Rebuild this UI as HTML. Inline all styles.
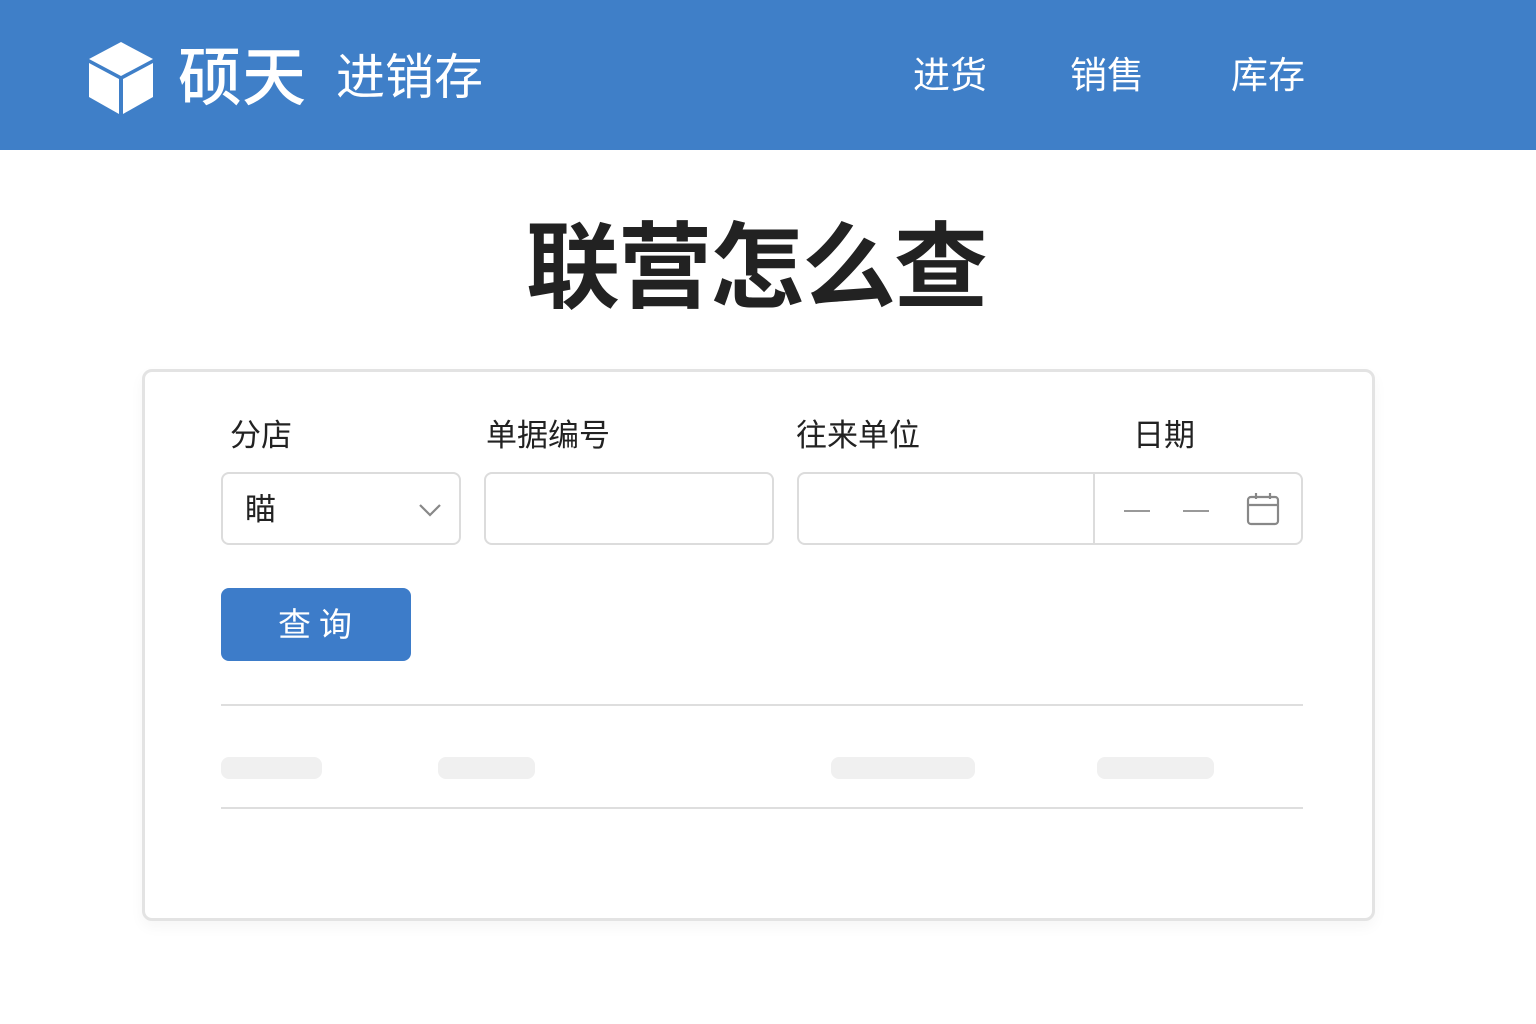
<!DOCTYPE html>
<html><head><meta charset="utf-8"><style>
*{margin:0;padding:0;box-sizing:border-box}
body{width:1536px;height:1024px;background:#fff;font-family:"Liberation Sans","Noto Sans CJK SC",sans-serif;position:relative;overflow:hidden;color:#222}
.hdr{position:absolute;left:0;top:0;width:1536px;height:150px;background:#3f7fc8}
.abs{position:absolute;white-space:nowrap}
.w{color:#fff}
.card{position:absolute;left:142px;top:369px;width:1233px;height:552px;border:3px solid #e3e3e3;border-radius:10px;background:#fff;box-shadow:0 6px 14px rgba(0,0,0,0.04)}
.lbl{font-size:31px;color:#222;top:410px}
.box{position:absolute;top:472px;height:73px;border:2px solid #dcdcdc;border-radius:8px;background:#fff}
.sk{position:absolute;top:757px;height:22px;background:#f0f0f0;border-radius:8px}
.line{position:absolute;left:221px;width:1082px;height:2px;background:#dedede}
</style></head><body>
<div class="hdr"></div>
<svg class="abs" style="left:86px;top:40px" width="70" height="76" viewBox="0 0 70 76">
<polygon points="35,2 67,19 35,36 3,19" fill="#fff"/>
<polygon points="3,23 33,39 33,74 3,57" fill="#fff"/>
<polygon points="37,39 67,23 67,57 37,74" fill="#fff"/>
</svg>
<div class="abs w" style="left:178px;top:40px;font-size:64px;font-weight:500;line-height:76px">硕天</div>
<div class="abs w" style="left:336px;top:48px;font-size:49px;line-height:60px">进销存</div>
<div class="abs w" style="left:913px;top:52px;font-size:37px;line-height:48px">进货</div>
<div class="abs w" style="left:1070px;top:52px;font-size:37px;line-height:48px">销售</div>
<div class="abs w" style="left:1231px;top:52px;font-size:37px;line-height:48px">库存</div>
<div class="abs" style="left:0;width:1536px;text-align:center;top:213px;font-size:94px;font-weight:bold;line-height:110px;color:#222;letter-spacing:-2px;padding-right:24px">联营怎么查</div>
<div class="card"></div>
<div class="abs lbl" style="left:230px">分店</div>
<div class="abs lbl" style="left:486px">单据编号</div>
<div class="abs lbl" style="left:796px">往来单位</div>
<div class="abs lbl" style="left:1133px">日期</div>
<div class="box" style="left:221px;width:240px"></div>
<div class="abs" style="left:245px;top:490px;font-size:31px;line-height:40px">瞄</div>
<svg class="abs" style="left:418px;top:502px" width="26" height="16"><polyline points="2,3 12,13 22,3" fill="none" stroke="#888" stroke-width="2.2"/></svg>
<div class="box" style="left:484px;width:290px"></div>
<div class="box" style="left:797px;width:506px"></div>
<div class="abs" style="left:1093px;top:474px;width:2px;height:69px;background:#dcdcdc"></div>
<div class="abs" style="left:1124px;top:510px;width:26px;height:2px;background:#999"></div>
<div class="abs" style="left:1183px;top:510px;width:26px;height:2px;background:#999"></div>
<svg class="abs" style="left:1246px;top:492px" width="34" height="34" viewBox="0 0 34 34"><rect x="2" y="5" width="30" height="27" rx="3" fill="none" stroke="#888" stroke-width="2.2"/><line x1="2" y1="13" x2="32" y2="13" stroke="#888" stroke-width="2.2"/><line x1="10" y1="1" x2="10" y2="7" stroke="#888" stroke-width="2.2"/><line x1="24" y1="1" x2="24" y2="7" stroke="#888" stroke-width="2.2"/></svg>
<div class="abs" style="left:221px;top:588px;width:190px;height:73px;background:#3d7cc9;border-radius:8px;color:#fff;font-size:33px;text-align:center;line-height:73px;letter-spacing:8px;padding-left:6px">查询</div>
<div class="line" style="top:704px"></div>
<div class="sk" style="left:221px;width:101px"></div>
<div class="sk" style="left:438px;width:97px"></div>
<div class="sk" style="left:831px;width:144px"></div>
<div class="sk" style="left:1097px;width:117px"></div>
<div class="line" style="top:807px"></div>
</body></html>
